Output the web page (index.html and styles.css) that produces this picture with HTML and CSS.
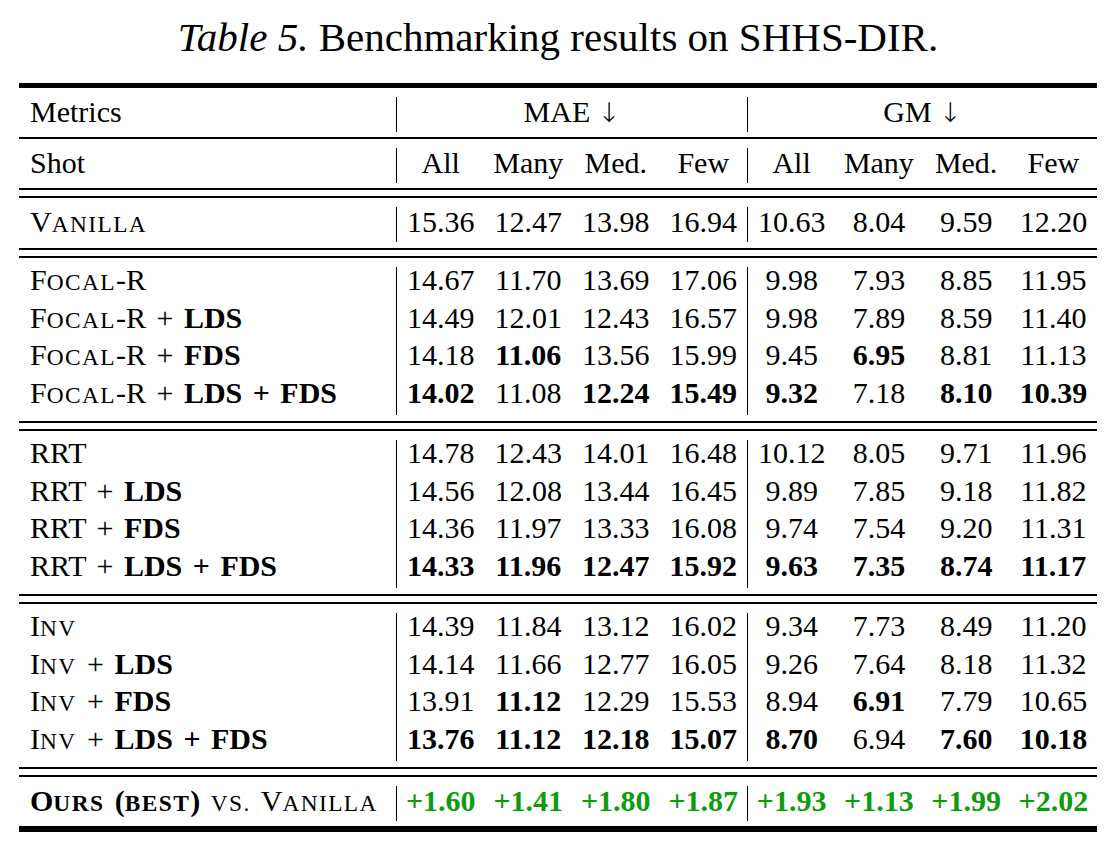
FILE: index.html
```html
<!DOCTYPE html>
<html>
<head>
<meta charset="utf-8">
<title>Table 5</title>
<link rel="stylesheet" href="styles.css">
</head>
<body>
<div class="page">
  <div class="caption"><i>Table 5.</i> Benchmarking results on SHHS-DIR.</div>
  <div class="tbl">
    <div class="rule thick"></div>

    <div class="blk one">
      <div class="lab"><div class="ln">Metrics</div></div>
      <div class="sec"><div class="ln c">MAE <span class="ar">↓</span></div></div>
      <div class="sec last"><div class="ln c">GM <span class="ar">↓</span></div></div>
    </div>
    <div class="rule"></div>
    <div class="blk one">
      <div class="lab"><div class="ln">Shot</div></div>
      <div class="sec"><div class="ln q"><span>All</span><span>Many</span><span>Med.</span><span>Few</span></div></div>
      <div class="sec last"><div class="ln q"><span>All</span><span>Many</span><span>Med.</span><span>Few</span></div></div>
    </div>
    <div class="rule dbl"></div>

    <div class="blk one van">
      <div class="lab"><div class="ln">V<span class="s">anilla</span></div></div>
      <div class="sec"><div class="ln q"><span>15.36</span><span>12.47</span><span>13.98</span><span>16.94</span></div></div>
      <div class="sec last"><div class="ln q"><span>10.63</span><span>8.04</span><span>9.59</span><span>12.20</span></div></div>
    </div>
    <div class="rule dbl"></div>

    <div class="blk grp">
      <div class="lab">
        <div class="ln">F<span class="s">ocal</span>-R</div>
        <div class="ln">F<span class="s">ocal</span>-R + <b>LDS</b></div>
        <div class="ln">F<span class="s">ocal</span>-R + <b>FDS</b></div>
        <div class="ln">F<span class="s">ocal</span>-R + <b>LDS + FDS</b></div>
      </div>
      <div class="sec">
        <div class="ln q"><span>14.67</span><span>11.70</span><span>13.69</span><span>17.06</span></div>
        <div class="ln q"><span>14.49</span><span>12.01</span><span>12.43</span><span>16.57</span></div>
        <div class="ln q"><span>14.18</span><b>11.06</b><span>13.56</span><span>15.99</span></div>
        <div class="ln q"><b>14.02</b><span>11.08</span><b>12.24</b><b>15.49</b></div>
      </div>
      <div class="sec last">
        <div class="ln q"><span>9.98</span><span>7.93</span><span>8.85</span><span>11.95</span></div>
        <div class="ln q"><span>9.98</span><span>7.89</span><span>8.59</span><span>11.40</span></div>
        <div class="ln q"><span>9.45</span><b>6.95</b><span>8.81</span><span>11.13</span></div>
        <div class="ln q"><b>9.32</b><span>7.18</span><b>8.10</b><b>10.39</b></div>
      </div>
    </div>
    <div class="rule dbl"></div>

    <div class="blk grp">
      <div class="lab">
        <div class="ln">RRT</div>
        <div class="ln">RRT + <b>LDS</b></div>
        <div class="ln">RRT + <b>FDS</b></div>
        <div class="ln">RRT + <b>LDS + FDS</b></div>
      </div>
      <div class="sec">
        <div class="ln q"><span>14.78</span><span>12.43</span><span>14.01</span><span>16.48</span></div>
        <div class="ln q"><span>14.56</span><span>12.08</span><span>13.44</span><span>16.45</span></div>
        <div class="ln q"><span>14.36</span><span>11.97</span><span>13.33</span><span>16.08</span></div>
        <div class="ln q"><b>14.33</b><b>11.96</b><b>12.47</b><b>15.92</b></div>
      </div>
      <div class="sec last">
        <div class="ln q"><span>10.12</span><span>8.05</span><span>9.71</span><span>11.96</span></div>
        <div class="ln q"><span>9.89</span><span>7.85</span><span>9.18</span><span>11.82</span></div>
        <div class="ln q"><span>9.74</span><span>7.54</span><span>9.20</span><span>11.31</span></div>
        <div class="ln q"><b>9.63</b><b>7.35</b><b>8.74</b><b>11.17</b></div>
      </div>
    </div>
    <div class="rule dbl"></div>

    <div class="blk grp">
      <div class="lab">
        <div class="ln">I<span class="s">nv</span></div>
        <div class="ln">I<span class="s">nv</span> + <b>LDS</b></div>
        <div class="ln">I<span class="s">nv</span> + <b>FDS</b></div>
        <div class="ln">I<span class="s">nv</span> + <b>LDS + FDS</b></div>
      </div>
      <div class="sec">
        <div class="ln q"><span>14.39</span><span>11.84</span><span>13.12</span><span>16.02</span></div>
        <div class="ln q"><span>14.14</span><span>11.66</span><span>12.77</span><span>16.05</span></div>
        <div class="ln q"><span>13.91</span><b>11.12</b><span>12.29</span><span>15.53</span></div>
        <div class="ln q"><b>13.76</b><b>11.12</b><b>12.18</b><b>15.07</b></div>
      </div>
      <div class="sec last">
        <div class="ln q"><span>9.34</span><span>7.73</span><span>8.49</span><span>11.20</span></div>
        <div class="ln q"><span>9.26</span><span>7.64</span><span>8.18</span><span>11.32</span></div>
        <div class="ln q"><span>8.94</span><b>6.91</b><span>7.79</span><span>10.65</span></div>
        <div class="ln q"><b>8.70</b><span>6.94</span><b>7.60</b><b>10.18</b></div>
      </div>
    </div>
    <div class="rule dbl"></div>

    <div class="blk one">
      <div class="lab"><div class="ln"><b>O<span class="s">urs</span> (<span class="s">best</span>)</b> <span class="s">vs.</span> V<span class="s">anilla</span></div></div>
      <div class="sec"><div class="ln q gr"><span>+1.60</span><span>+1.41</span><span>+1.80</span><span>+1.87</span></div></div>
      <div class="sec last"><div class="ln q gr"><span>+1.93</span><span>+1.13</span><span>+1.99</span><span>+2.02</span></div></div>
    </div>
    <div class="rule bottom"></div>
  </div>
</div>
</body>
</html>
```

FILE: styles.css
```css
html,
body {
  margin: 0;
  padding: 0;
  background: #ffffff;
}

body {
  font-family: "Liberation Serif", serif;
  color: #000000;
}

.page {
  width: 1078px;
  margin-left: 19px;
}

.caption {
  box-sizing: border-box;
  height: 83px;
  padding-top: 17px;
  font-family: "Liberation Serif", serif;
  font-size: 41px;
  line-height: 40px;
  text-align: center;
  white-space: nowrap;
}

.tbl {
  font-family: "Liberation Serif", serif;
  font-size: 30px;
}

.rule {
  height: 2px;
  background: #000000;
}

.rule.thick {
  height: 5px;
}

.rule.bottom {
  height: 6px;
}

.rule.dbl {
  box-sizing: border-box;
  height: 10px;
  background: none;
  border-top: 2px solid #000000;
  border-bottom: 2px solid #000000;
}

.blk {
  display: flex;
  padding: 9px 0 5px;
}

.blk.van {
  padding-bottom: 6px;
}

.blk.grp {
  padding: 9px 0 6px;
}

.lab {
  box-sizing: border-box;
  width: 377px;
  padding-left: 11px;
  word-spacing: 3px;
}

.sec {
  box-sizing: border-box;
  width: 351px;
  border-left: 1px solid #000000;
}

.sec.last {
  width: 350px;
}

.one .lab,
.one .sec {
  height: 35px;
}

.ln {
  height: 35px;
  line-height: 29px;
  white-space: nowrap;
}

.grp .lab,
.grp .sec {
  height: 148px;
}

.grp .ln {
  height: 37.7px;
  line-height: 25.7px;
}

.q {
  display: grid;
  grid-template-columns: repeat(4, 1fr);
  text-align: center;
}

.c {
  text-align: center;
}

.s {
  text-transform: uppercase;
  font-size: 0.78em;
  letter-spacing: 0.06em;
}

.ar {
  font-family: "DejaVu Sans", sans-serif;
  font-weight: 200;
  font-size: 0.9em;
}

b {
  font-weight: bold;
}

.gr {
  color: #0c9c0c;
  font-weight: bold;
}
```
